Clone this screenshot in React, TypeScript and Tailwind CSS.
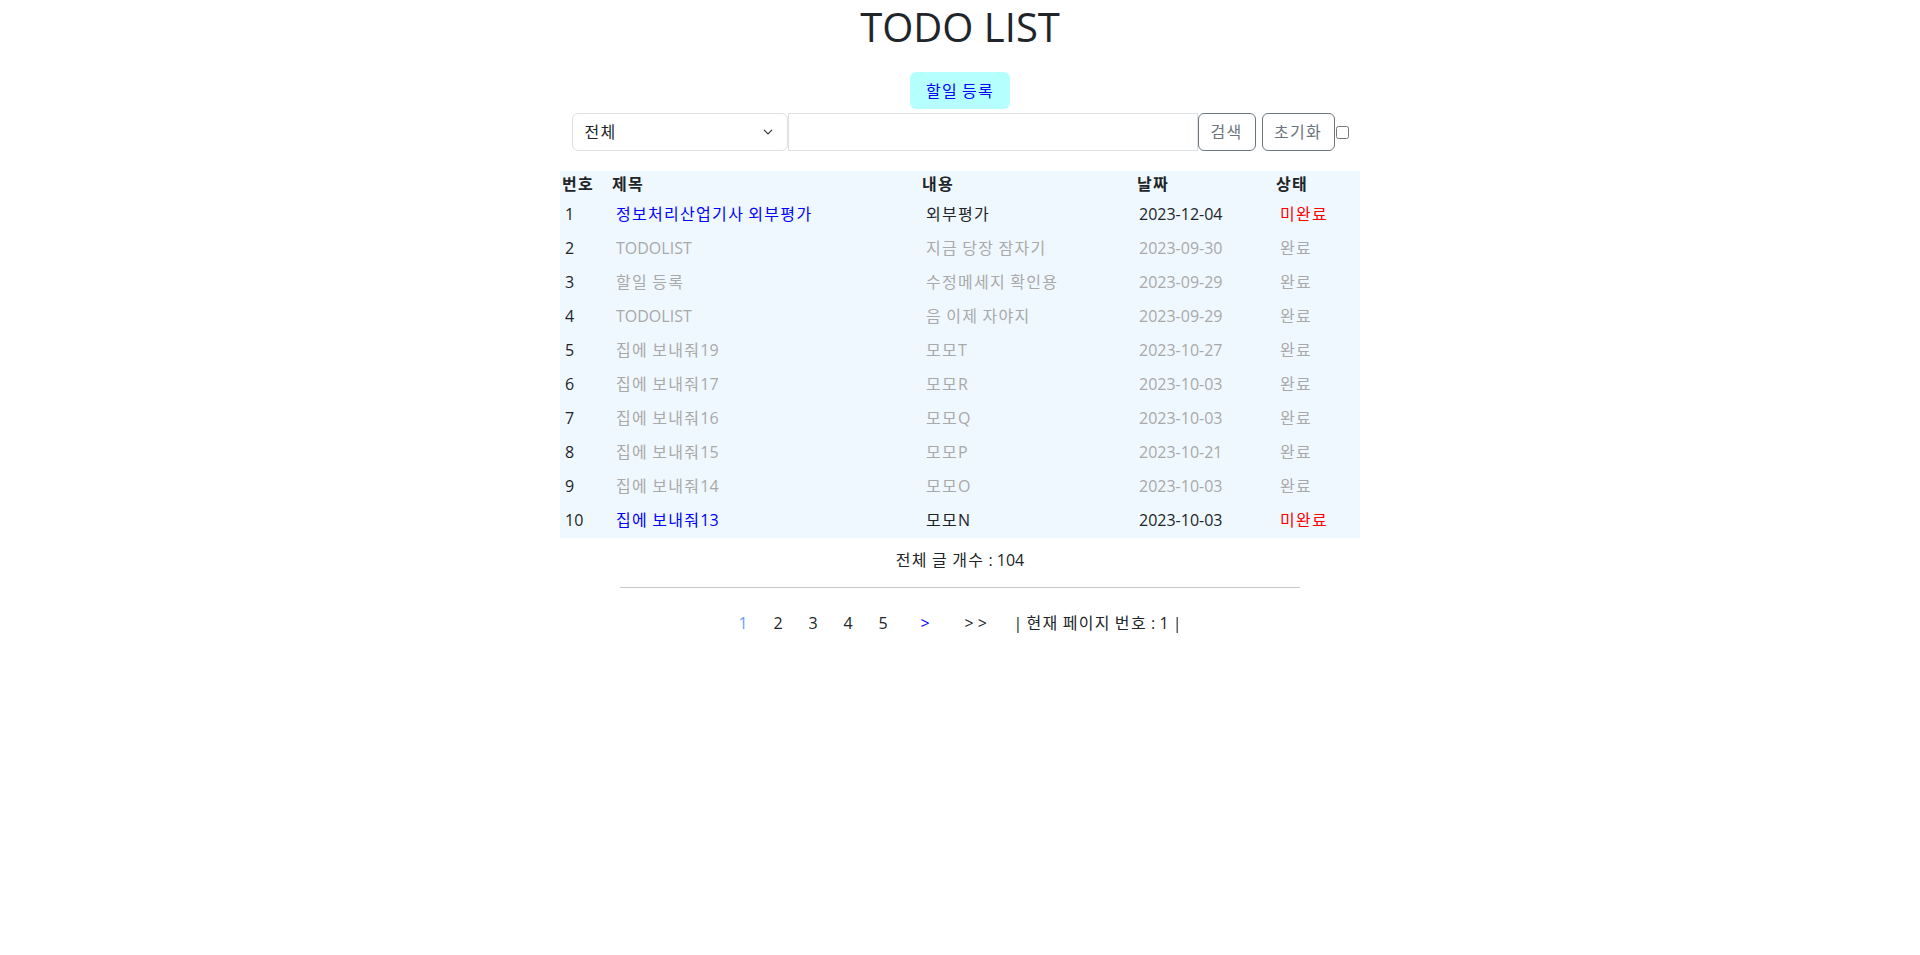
import React from "react";

type Todo = {
  no: number;
  title: string;
  content: string;
  date: string;
  done: boolean;
};

const TODOS: Todo[] = [
  { no: 1, title: "정보처리산업기사 외부평가", content: "외부평가", date: "2023-12-04", done: false },
  { no: 2, title: "TODOLIST", content: "지금 당장 잠자기", date: "2023-09-30", done: true },
  { no: 3, title: "할일 등록", content: "수정메세지 확인용", date: "2023-09-29", done: true },
  { no: 4, title: "TODOLIST", content: "음 이제 자야지", date: "2023-09-29", done: true },
  { no: 5, title: "집에 보내줘19", content: "모모T", date: "2023-10-27", done: true },
  { no: 6, title: "집에 보내줘17", content: "모모R", date: "2023-10-03", done: true },
  { no: 7, title: "집에 보내줘16", content: "모모Q", date: "2023-10-03", done: true },
  { no: 8, title: "집에 보내줘15", content: "모모P", date: "2023-10-21", done: true },
  { no: 9, title: "집에 보내줘14", content: "모모O", date: "2023-10-03", done: true },
  { no: 10, title: "집에 보내줘13", content: "모모N", date: "2023-10-03", done: false },
];

const HEADERS = ["번호", "제목", "내용", "날짜", "상태"];

// hangul in the fallback font runs a bit narrow, space it out to match
const K = ({ text }: { text: string }) => (
  <>
    {text.split(/([가-힣]+)/).map((part, i) =>
      /[가-힣]/.test(part) ? (
        <span key={i} className="tracking-[1.3px]">
          {part}
        </span>
      ) : (
        <React.Fragment key={i}>{part}</React.Fragment>
      )
    )}
  </>
);

const TodoRow = ({ todo }: { todo: Todo }) => {
  const muted = todo.done ? "text-[#a9a9a9]" : "text-[#212529]";
  return (
    <tr className="h-[34px]">
      <td className="pb-[2px] pl-[5px] text-[#212529]">{todo.no}</td>
      <td className={`pb-[2px] pl-[6px] ${todo.done ? "text-[#a9a9a9]" : "text-[#0000ff]"}`}>
        <K text={todo.title} />
      </td>
      <td className={`pb-[2px] pl-[6px] ${muted}`}>
        <K text={todo.content} />
      </td>
      <td className={`pb-[2px] pl-[4px] ${muted}`}>{todo.date}</td>
      <td className={`pb-[2px] pl-[6px] ${todo.done ? "text-[#a9a9a9]" : "text-[#ff0000]"}`}>
        <K text={todo.done ? "완료" : "미완료"} />
      </td>
    </tr>
  );
};

export default function App() {
  const [filter, setFilter] = React.useState("all");
  const [keyword, setKeyword] = React.useState("");

  return (
    <div
      className="min-h-screen bg-white text-base text-[#212529]"
      style={{ fontFamily: '"Open Sans", "Noto Sans CJK KR", sans-serif' }}
    >
      <h1 className="pt-[3px] text-center text-[40px] font-normal leading-[48px]">TODO LIST</h1>

      <div className="flex justify-center pt-[21px]">
        <button className="h-[37px] w-[100px] rounded-[6px] bg-[#b5ffff] text-[#0000ff]">
          <K text="할일 등록" />
        </button>
      </div>

      <div className="mt-[4px] flex items-center justify-center">
        <div className="relative">
          <select
            value={filter}
            onChange={(e) => setFilter(e.target.value)}
            className="h-[38px] w-[216px] appearance-none rounded-[6px] border border-[#dee2e6] bg-white pl-[12px] tracking-[1.3px] text-[#212529] outline-none"
          >
            <option value="all">전체</option>
            <option value="title">제목</option>
            <option value="content">내용</option>
          </select>
          <svg
            className="pointer-events-none absolute right-[14px] top-[14px]"
            width="12"
            height="10"
            viewBox="0 0 16 16"
            fill="none"
          >
            <path
              d="M2 5l6 6 6-6"
              stroke="#343a40"
              strokeWidth="2"
              strokeLinecap="round"
              strokeLinejoin="round"
            />
          </svg>
        </div>
        <input
          value={keyword}
          onChange={(e) => setKeyword(e.target.value)}
          className="h-[38px] w-[410px] border border-[#dee2e6] px-[12px] outline-none"
        />
        <button className="h-[38px] w-[58px] rounded-[6px] border border-[#6c757d] text-[#6c757d]">
          <K text="검색" />
        </button>
        <button className="ml-[6px] h-[38px] w-[73px] rounded-[6px] border border-[#6c757d] text-[#6c757d]">
          <K text="초기화" />
        </button>
        <input type="checkbox" className="m-0 ml-[1px] h-[13px] w-[13px]" />
      </div>

      <div className="mt-[20px] flex justify-center">
        <table className="w-[800px] table-fixed border-collapse bg-[#f0f8ff]">
          <colgroup>
            <col className="w-[50px]" />
            <col className="w-[310px]" />
            <col className="w-[215px]" />
            <col className="w-[139px]" />
            <col className="w-[86px]" />
          </colgroup>
          <thead>
            <tr className="h-[27px]">
              {HEADERS.map((h) => (
                <th key={h} className="pb-[2px] pl-[2px] text-left font-bold">
                  <K text={h} />
                </th>
              ))}
            </tr>
          </thead>
          <tbody>
            {TODOS.map((t) => (
              <TodoRow key={t.no} todo={t} />
            ))}
          </tbody>
        </table>
      </div>

      <p className="mt-[10px] text-center leading-[24px]">
        <K text="전체 글 개수 : 104" />
      </p>

      <hr className="mx-auto mt-[15px] w-[680px] border-0 border-t border-[#c8c9ca]" />

      <div className="mt-[23px] flex justify-center leading-[24px]">
        <a className="w-[35px] text-[#6c9cff]">1</a>
        <a className="w-[35px]">2</a>
        <a className="w-[35px]">3</a>
        <a className="w-[35px]">4</a>
        <a className="w-[42px]">5</a>
        <a className="w-[44px] text-[#0000ff]">&gt;</a>
        <a className="w-[49px]">&gt; &gt;</a>
        <span>
          <K text="| 현재 페이지 번호 : 1 |" />
        </span>
      </div>
    </div>
  );
}
